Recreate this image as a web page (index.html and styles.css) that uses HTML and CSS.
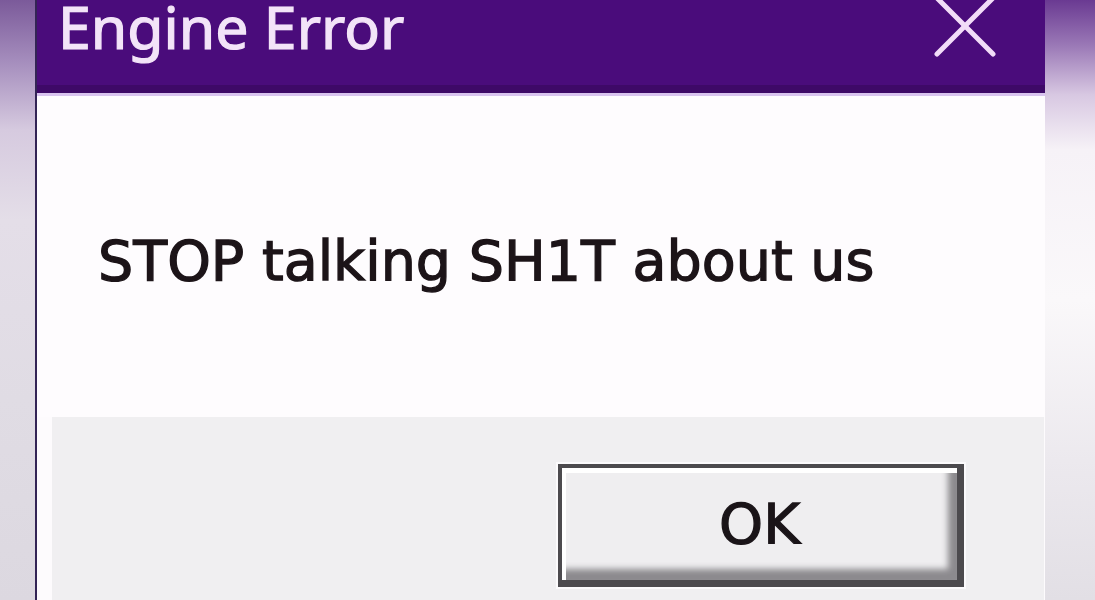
FILE: index.html
```html
<!DOCTYPE html>
<html>
<head>
<meta charset="utf-8">
<link rel="stylesheet" href="styles.css">
</head>
<body>
<div class="screen">
  <div class="side side-left"></div>
  <div class="dialog">
    <div class="titlebar">
      <span class="title">Engine Error</span>
      <svg class="close" width="64" height="60" viewBox="0 0 64 60">
        <line x1="4" y1="54" x2="60" y2="-2" stroke="#f2dcf8" stroke-width="5" stroke-linecap="round"/>
        <line x1="4" y1="-2" x2="60" y2="54" stroke="#f2dcf8" stroke-width="5" stroke-linecap="round"/>
      </svg>
    </div>
    <div class="content">
      <p class="message">STOP talking SH1T about us</p>
    </div>
    <div class="footer">
      <button class="ok">OK</button>
    </div>
  </div>
  <div class="side side-right"></div>
</div>
</body>
</html>
```
FILE: styles.css
```css
html, body {
  margin: 0;
  padding: 0;
  width: 1095px;
  height: 600px;
  overflow: hidden;
}

.screen {
  display: flex;
  width: 1095px;
  height: 600px;
}

.side {
  flex: none;
  height: 600px;
}

.side-left {
  width: 35px;
  background: linear-gradient(to bottom, #7b5a9a 0px, #a48cbc 60px, #d6cadf 130px, #e4dee8 220px, #e0dce4 400px, #dcd8e0 600px);
}

.side-right {
  width: 50px;
  background: linear-gradient(to bottom, #6a3a92 0px, #9a78b6 45px, #d8c8e2 95px, #f6f2f7 150px, #faf8fa 300px, #ece9ee 460px, #e2dfe5 600px);
}

.dialog {
  flex: none;
  width: 1008px;
  height: 600px;
  border-left: 2px solid #332455;
  display: flex;
  flex-direction: column;
  background: #fdfbfd;
}

.titlebar {
  flex: none;
  height: 85px;
  border-bottom: 8px solid #3e0967;
  background: #4a0c7b;
  display: flex;
  justify-content: space-between;
  align-items: flex-start;
  padding: 0 48px 0 21px;
  box-shadow: 0 3px 0 #d9c4ef;
  position: relative;
  z-index: 1;
}

.title {
  font-family: "Noto Sans", "Open Sans", sans-serif;
  font-size: 59px;
  line-height: 52px;
  color: #f3e4f8;
  white-space: nowrap;
  -webkit-text-stroke: 1.2px #f3e4f8;
}

.close {
  display: block;
  flex: none;
}

.content {
  flex: none;
  height: 324px;
  padding: 136px 0 0 61px;
  box-sizing: border-box;
  background: #fefcfe;
}

.message {
  margin: 0;
  font-family: "DejaVu Sans", "Verdana", sans-serif;
  font-size: 55.5px;
  line-height: 64px;
  color: #1c1418;
  white-space: nowrap;
  -webkit-text-stroke: 1.3px #1c1418;
}

.footer {
  flex: 1;
  margin: 0 1px 0 15px;
  background: #f0eff1;
  display: flex;
  justify-content: flex-end;
  align-items: flex-start;
  padding: 47px 80px 0 0;
}

.ok {
  width: 406px;
  height: 123px;
  box-sizing: border-box;
  border: 4px solid #4c4a4e;
  border-right-width: 7px;
  border-bottom-width: 7px;
  background: #efeef0;
  box-shadow: inset 4px 5px 0 #ffffff, inset -9px -11px 6px #8c8a8e, 0 0 0 2px #fbfafc;
  font-family: "DejaVu Sans", "Verdana", sans-serif;
  font-size: 56px;
  color: #1a1418;
  -webkit-text-stroke: 1.3px #1a1418;
  padding: 0;
  line-height: 1;
}
```
